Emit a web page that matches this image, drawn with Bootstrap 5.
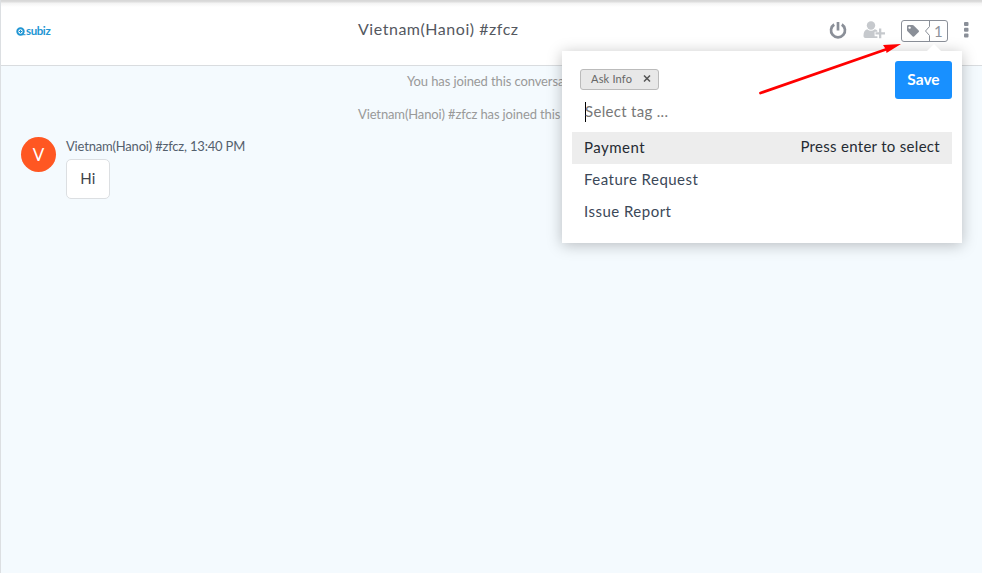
<!DOCTYPE html>
<html lang="en">
<head>
<meta charset="utf-8">
<meta name="viewport" content="width=device-width, initial-scale=1">
<title>Subiz conversation</title>
<link href="https://cdn.jsdelivr.net/npm/bootstrap@5.3.0/dist/css/bootstrap.min.css" rel="stylesheet">
<style>
body{font-family:Lato,"Open Sans",sans-serif;font-size:15px;line-height:20px;color:#40505f;background:#f4faff;letter-spacing:.2px}
.chat{border-left:1px solid #dcdfe2;background:#f4fafe}
.topbar{height:66px;border-bottom:1px solid #d9dcdf;background:linear-gradient(#d6d6d6 0,#dedede 2px,#f3f3f3 3px,#fff 7px);padding:0 13px 0 15px}
.brand{width:342px;color:#2196d3;font:bold 11.5px/12px Lato,sans-serif;letter-spacing:-.4px;margin-top:-3px}
.title{font-size:16px;color:#54585f;letter-spacing:.53px;margin-top:-7px}
.tools{margin-top:-5px}
.tools svg{display:block}
.tagbox{position:relative;margin:1px 16px 0 15px}
.tagcount{position:absolute;left:33px;top:1px;color:#8d929b;font-size:15px;letter-spacing:0}
.log{font-size:13px;color:#999}
.log .sys{width:561px;height:33px;line-height:31px;overflow:hidden}
.sys-a{padding-left:406px;letter-spacing:-.11px;white-space:nowrap}
.sys-b{padding-left:357px;letter-spacing:-.13px}
.avatar{width:35px;height:35px;background:#ff5722;font:17px/35px Lato,sans-serif;margin-top:1px}
.note{padding-left:10px}
.meta{font-size:13px;line-height:18px;color:#54606d;letter-spacing:-.19px;padding-top:1px}
.bubble{width:44px;height:40px;border:1px solid #dcdfe2;border-radius:5px;line-height:37px;margin-top:4px;font-size:15px;color:#40444a}
.tagmenu{position:absolute;left:562px;top:51px;width:400px;height:192px;box-shadow:0 2px 14px rgba(0,0,0,.25)}
.tagmenu::before{content:"";position:absolute;right:21px;top:-7px;border:7px solid transparent;border-top:0;border-bottom-color:#fff}
.menu-head{height:81px;padding:10px 10px 0 18px}
.chip{height:21px;width:79px;margin-top:8px;border:1px solid #bbb;border-radius:3px;background:#e8e8e8;color:#666;font-size:11px;line-height:17px;padding:0 7px 2px 10px;letter-spacing:.2px}
.search{margin-top:12px;height:20px;line-height:18px;color:#777;border-left:1px solid #000;margin-left:5px;letter-spacing:.31px;text-indent:-1px}
.save{width:57px;height:38px;padding:0;background:#1890ff;border:0;border-radius:3px;font-weight:bold;font-size:15.5px;letter-spacing:0}
.choice{height:32px;line-height:30px;margin:0 10px;padding:0 12px;color:#3b4858;letter-spacing:.48px}
.choice.picked{background:#ededed;color:#252b33}
.hint{letter-spacing:.3px;line-height:29px}
.pointer{position:absolute;left:750px;top:35px;pointer-events:none}
</style>
<script src="https://cdn.jsdelivr.net/npm/bootstrap@5.3.0/dist/js/bootstrap.bundle.min.js"></script>
</head>
<body>
<div class="chat vh-100 overflow-hidden position-relative">
  <header class="topbar d-flex align-items-center">
    <div class="brand d-flex align-items-center">
      <svg width="10" height="9" viewBox="0 0 10 9"><circle cx="4.500" cy="4.500" r="3.200" fill="#fff" stroke="#2196d3" stroke-width="2"/><path d="M4.500 3v3M3 4.500h3M6 7.700h3.500" stroke="#2196d3"/></svg><span>subiz</span>
    </div>
    <div class="title">Vietnam(Hanoi) #zfcz</div>
    <div class="tools d-flex align-items-center ms-auto">
      <svg width="18" height="19" viewBox="0 0 18 19" fill="none" stroke="#8a8f98" stroke-width="2.700"><path d="M5.200 3.500a7 7 0 1 0 7.600 0M9 1v8.500"/></svg>
      <svg class="ms-3" width="23" height="18" viewBox="0 0 23 18" fill="#c6c9cd"><circle cx="8" cy="4.500" r="4.200"/><path d="M4.200 8.300c2.400 2 5.200 2 7.600 0 1.200.2 2 .7 2.600 1.500v1H11.600v4.400h2.800V17H2.500C1 17 .4 16 .5 14.500.6 11 1.800 8.700 4.200 8.300z"/><path d="M16 7.500h2.300v3.700H22v2.300h-3.700v3.700H16v-3.700h-3.500v-2.300H16z"/></svg>
      <div class="tagbox"><svg width="47" height="22" viewBox="0 0 47 22" fill="none" stroke="#8a8f98"><rect x=".5" y=".5" width="46" height="21" rx="2.500"/><path d="M28.500.5v6l-4 4.500 4 4.500v6"/><path fill="#8a8f98" stroke="none" fill-rule="evenodd" d="M6 6.200Q6 5 7.200 5h4.300q.7 0 1.200.5l5 5q.7.700 0 1.400L13.100 16.500q-.7.700-1.400 0L6.500 11.300Q6 10.800 6 10zM8.600 6.400a1.200 1.200 0 1 0 .01 0z"/></svg><span class="tagcount">1</span></div>
      <svg width="5" height="16" viewBox="0 0 5 16" fill="#8a8f98"><rect width="4.500" height="4" rx="1"/><rect y="5.700" width="4.500" height="4" rx="1"/><rect y="11.400" width="4.500" height="4" rx="1"/></svg>
    </div>
  </header>
  <main class="log">
    <div class="sys sys-a">You has joined this conversation</div>
    <div class="sys sys-b">Vietnam(Hanoi) #zfcz has joined this conversation</div>
    <div class="d-flex ps-3 pt-1">
      <div class="avatar rounded-circle text-white text-center ms-1">V</div>
      <div class="note">
        <div class="meta">Vietnam(Hanoi) #zfcz, 13:40 PM</div>
        <div class="bubble bg-white text-center">Hi</div>
      </div>
    </div>
  </main>
</div>
<section class="tagmenu bg-white">
  <div class="menu-head d-flex justify-content-between">
    <div>
      <div class="chip d-flex justify-content-between align-items-center"><span>Ask Info</span><svg width="8" height="8" viewBox="0 0 8 8" stroke="#555" stroke-width="1.500"><path d="M1 .5l6 6M7 .5l-6 6"/></svg></div>
      <div class="search">Select tag ...</div>
    </div>
    <button class="btn btn-primary save">Save</button>
  </div>
  <div class="choice picked d-flex justify-content-between"><span>Payment</span><span class="hint">Press enter to select</span></div>
  <div class="choice">Feature Request</div>
  <div class="choice">Issue Report</div>
</section>
<svg class="pointer" width="155" height="65" viewBox="0 0 155 65"><path d="M10.500 58L140 13" stroke="#f00" stroke-width="2.800" stroke-linecap="round"/><path d="M151 9l-14.500 9-.5-3.500-3-4.500z" fill="#f00"/></svg>
</body>
</html>
